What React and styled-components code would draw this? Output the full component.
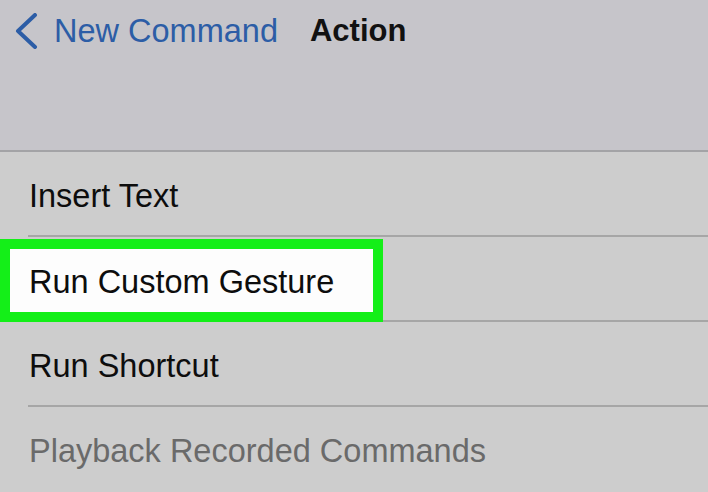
import React from "react";
import styled, { createGlobalStyle } from "styled-components";

const GlobalStyle = createGlobalStyle`
  html, body {
    margin: 0;
    padding: 0;
    background: #cdcdcd;
  }
  body {
    width: 708px;
    height: 492px;
    overflow: hidden;
    font-family: "Liberation Sans", Arial, sans-serif;
  }
`;

const Screen = styled.div`
  width: 708px;
  height: 492px;
  display: flex;
  flex-direction: column;
  background: #cdcdcd;
`;

const Header = styled.header`
  height: 139px;
  background: #c6c5ca;
  border-bottom: 2px solid #a3a3a6;
  display: flex;
  align-items: flex-start;
  padding: 12px 0 0 15px;
  box-sizing: content-box;
  gap: 32px;
`;

const BackButton = styled.button`
  display: flex;
  align-items: center;
  gap: 15px;
  border: none;
  background: none;
  padding: 0;
  color: #2c5da6;
  font-family: inherit;
  font-size: 32.5px;
  cursor: pointer;
  height: 38px;
`;

const Title = styled.h1`
  margin: 0;
  font-size: 31px;
  font-weight: bold;
  color: #111;
  line-height: 38px;
`;

const List = styled.ul`
  list-style: none;
  margin: 0;
  padding: 0;
  display: flex;
  flex-direction: column;
`;

const Row = styled.li`
  position: relative;
  height: 85px;
  box-sizing: border-box;
  display: flex;
  align-items: center;
  padding: 4px 0 0 29px;
  font-size: 32.5px;
  color: ${(p) => (p.$muted ? "#6a6a6a" : "#0d0d0d")};

  &::after {
    content: "";
    position: absolute;
    left: 28px;
    right: 0;
    bottom: 0;
    height: 2px;
    background: ${(p) => (p.$last ? "transparent" : "#a6a6a6")};
  }
`;

const Highlight = styled.div`
  position: absolute;
  left: 0;
  top: 2px;
  width: 383px;
  height: 83px;
  box-sizing: border-box;
  border: 10px solid #14ef18;
  background: #fdfdfd;
  display: flex;
  align-items: center;
  padding: 4px 0 0 19px;
  z-index: 1;
`;

const items = [
  { label: "Insert Text" },
  { label: "Run Custom Gesture", highlighted: true },
  { label: "Run Shortcut" },
  { label: "Playback Recorded Commands", muted: true },
];

function Chevron() {
  return (
    <svg width="24" height="36" viewBox="0 0 24 36">
      <path
        d="M20 2 L3 18 L20 34"
        fill="none"
        stroke="#2c5da6"
        strokeWidth="4"
        strokeLinecap="round"
        strokeLinejoin="round"
      />
    </svg>
  );
}

export default function App() {
  return (
    <Screen>
      <GlobalStyle />
      <Header>
        <BackButton>
          <Chevron />
          New Command
        </BackButton>
        <Title>Action</Title>
      </Header>
      <List>
        {items.map((item, i) => (
          <Row key={item.label} $muted={item.muted} $last={i === items.length - 1}>
            {item.highlighted ? <Highlight>{item.label}</Highlight> : item.label}
          </Row>
        ))}
      </List>
    </Screen>
  );
}
